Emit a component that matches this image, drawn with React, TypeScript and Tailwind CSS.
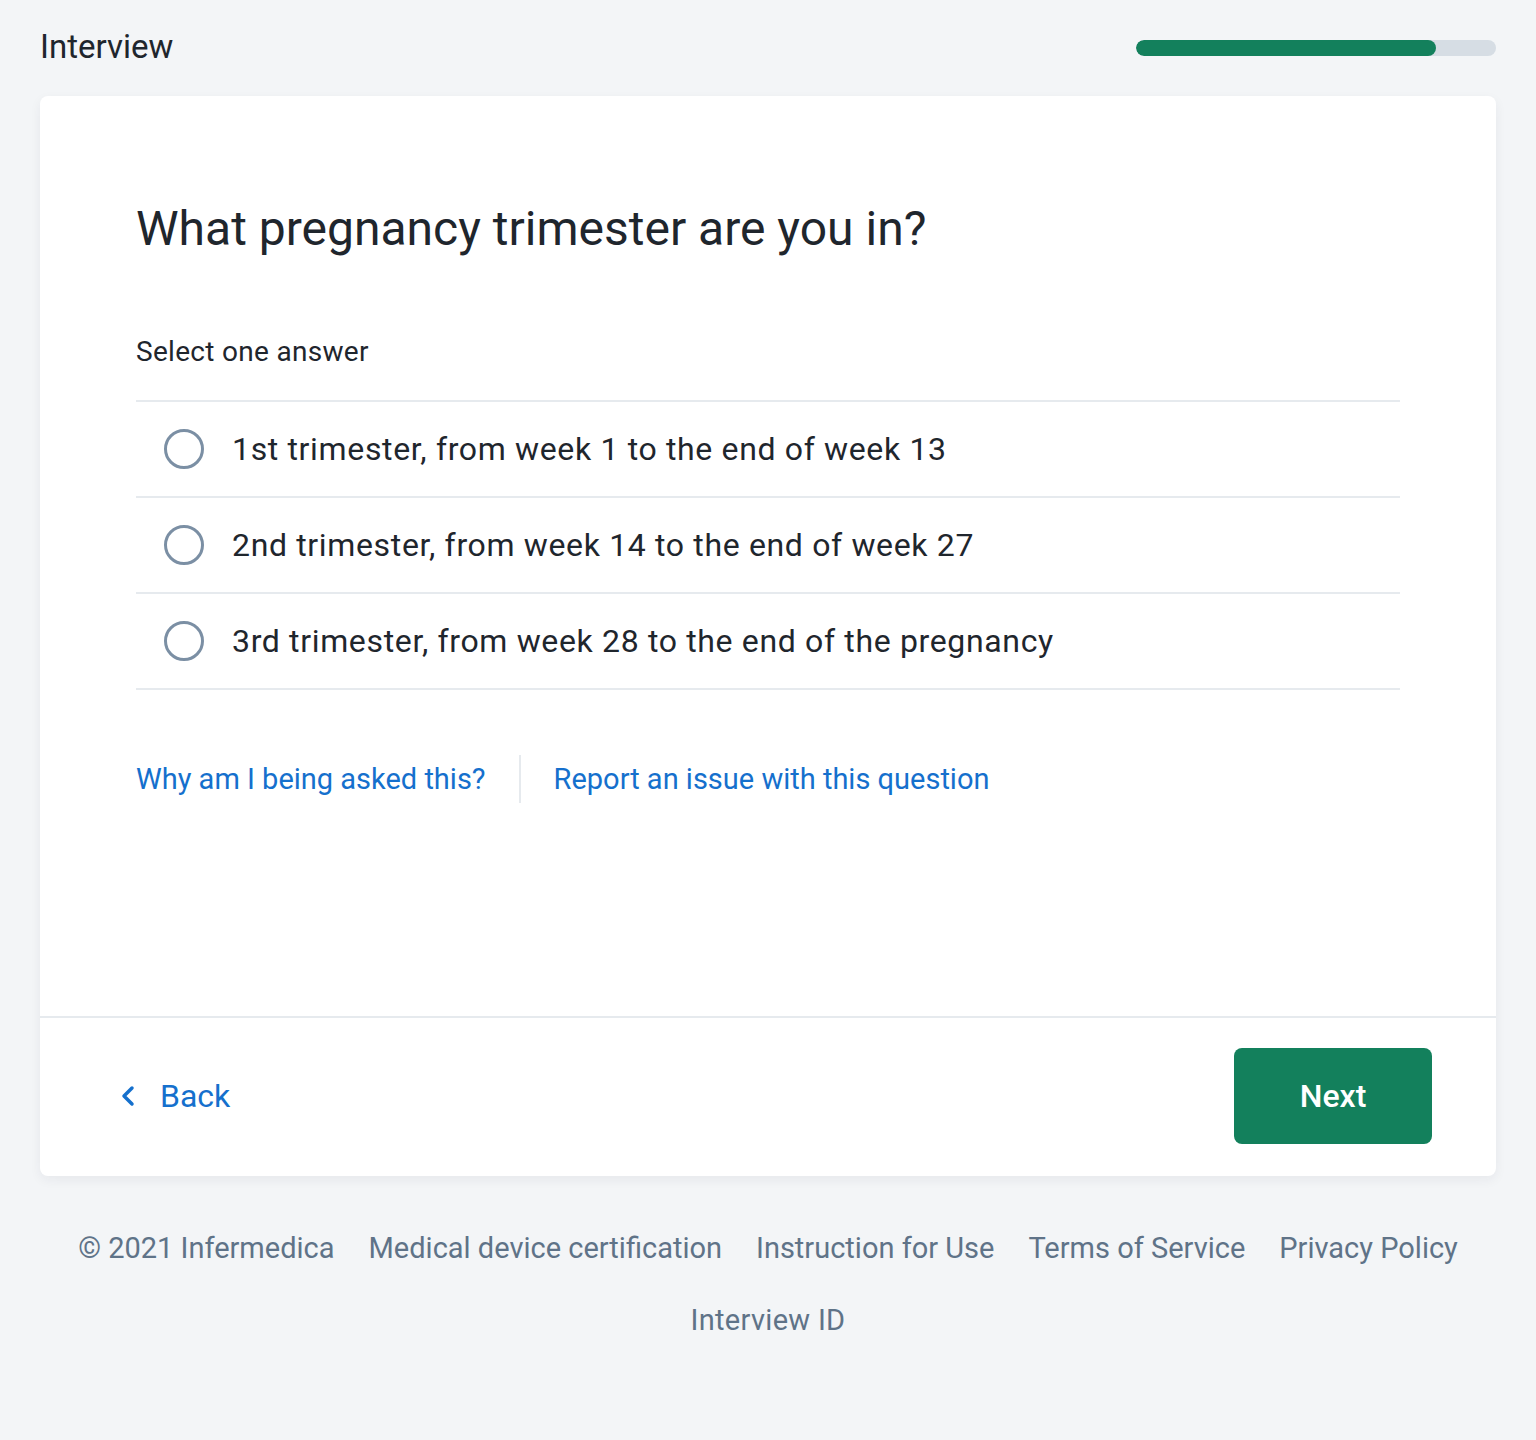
// Interview question screen (single-choice trimester question)
import { useState } from "react";

const options = [
  "1st trimester, from week 1 to the end of week 13",
  "2nd trimester, from week 14 to the end of week 27",
  "3rd trimester, from week 28 to the end of the pregnancy",
];

const footerLinks = [
  "© 2021 Infermedica",
  "Medical device certification",
  "Instruction for Use",
  "Terms of Service",
  "Privacy Policy",
];

function Radio({ checked }: { checked: boolean }) {
  return (
    <span className="flex h-10 w-10 shrink-0 items-center justify-center rounded-full border-[3px] border-[#7b8fa4]">
      {checked && <span className="h-4 w-4 rounded-full bg-[#7b8fa4]" />}
    </span>
  );
}

export default function App() {
  const [selected, setSelected] = useState<number | null>(null);

  return (
    <div className="min-h-[1440px] bg-[#f3f5f7] px-10 pt-7 font-['Roboto',sans-serif] text-[#1f262d]">
      {/* Header */}
      <div className="flex items-center justify-between">
        <h1 className="text-[33px] leading-[38px]">Interview</h1>
        <div className="mt-[2px] h-4 w-[360px] overflow-hidden rounded-full bg-[#d6dde4]">
          <div className="h-full w-[300px] rounded-full bg-[#13805c]" />
        </div>
      </div>

      {/* Card */}
      <div className="mt-[30px] rounded-lg bg-white shadow-[0_4px_12px_rgba(30,40,60,0.06)]">
        <div className="px-24 pb-[213px] pt-[103px]">
          <h2 className="text-[48px] leading-[60px]">What pregnancy trimester are you in?</h2>
          <p className="mt-[76px] text-[28px] leading-[34px] tracking-[0.3px]">Select one answer</p>

          <div className="mt-[31px] border-t-2 border-[#e6eaee]">
            {options.map((opt, i) => (
              <button
                key={opt}
                type="button"
                onClick={() => setSelected(i)}
                className="flex h-24 w-full items-center gap-[28px] border-b-2 border-[#e6eaee] pl-7 text-left"
              >
                <Radio checked={selected === i} />
                <span className="text-[32px] leading-[40px] tracking-[0.65px]">{opt}</span>
              </button>
            ))}
          </div>

          <div className="mt-[65px] flex items-center text-[29px] leading-[36px] text-[#1570cd]">
            <a href="#" className="pr-[33px]">Why am I being asked this?</a>
            <span className="h-12 w-0.5 bg-[#e6eaee]" />
            <a href="#" className="pl-[33px]">Report an issue with this question</a>
          </div>
        </div>

        {/* Card footer */}
        <div className="flex items-center justify-between border-t-2 border-[#e6eaee] pb-[32px] pt-[30px] pl-[78px] pr-16">
          <button type="button" className="flex items-center gap-[22px] text-[32px] text-[#1570cd]">
            <svg width="20" height="24" viewBox="0 0 20 24" fill="none" stroke="currentColor" strokeWidth="3.5" strokeLinecap="round" strokeLinejoin="round">
              <path d="M14 4 L6 12 L14 20" />
            </svg>
            Back
          </button>
          <button
            type="button"
            className="flex h-24 w-[198px] items-center justify-center rounded-lg bg-[#13805c] text-[32px] font-medium text-white"
          >
            Next
          </button>
        </div>
      </div>

      {/* Page footer */}
      <div className="mt-[52px] flex justify-center gap-[34px] text-[29px] leading-[40px] text-[#5f7388]">
        {footerLinks.map((l) => (
          <a key={l} href="#">{l}</a>
        ))}
      </div>
      <div className="mt-[32px] text-center text-[29px] leading-[40px] tracking-[0.3px] text-[#5f7388]">Interview ID</div>
    </div>
  );
}
